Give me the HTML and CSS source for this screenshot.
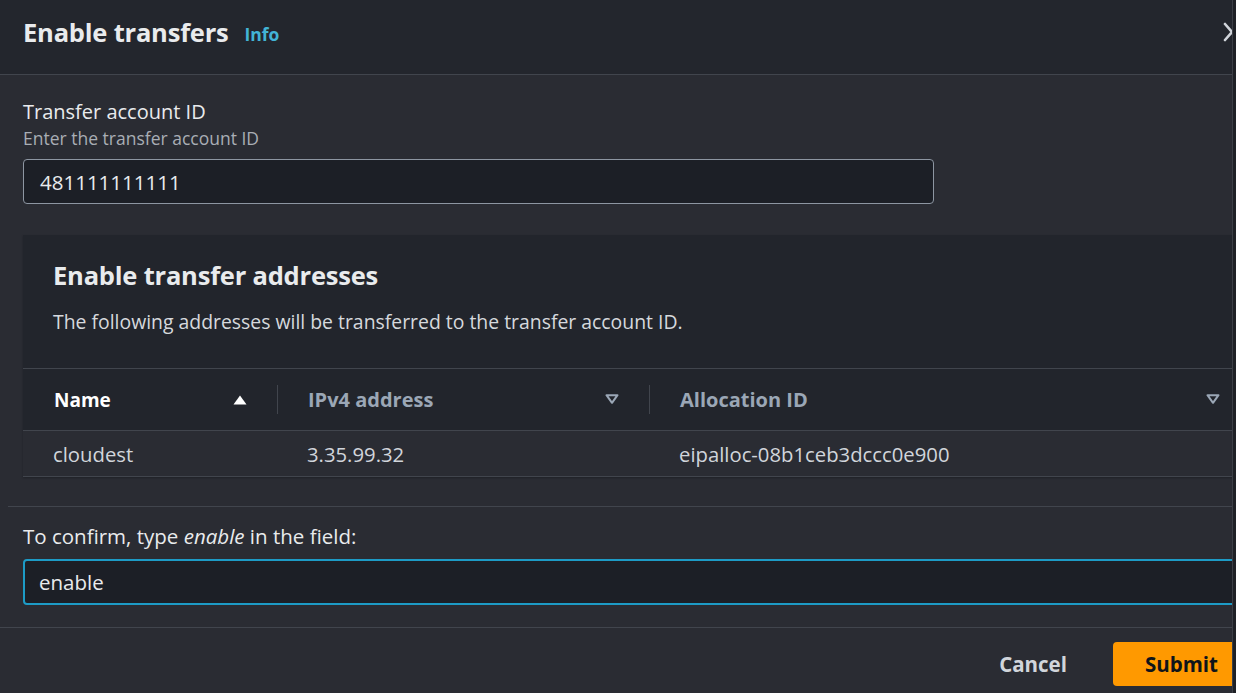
FILE: index.html
```html
<!DOCTYPE html>
<html lang="en">
<head>
  <meta charset="UTF-8" />
  <title>Enable transfers</title>
  <link rel="stylesheet" href="styles.css">
</head>
<body>
  <div class="modal">
    <div class="modal-inner">
      <!-- Header -->
      <div class="modal-header">
        <h1 class="title">Enable transfers</h1>
        <a class="info" href="#">Info</a>
        <button class="close" aria-label="Close">
          <svg width="20" height="20" viewBox="0 0 20 20"><path d="M3 2 L17 18 M17 2 L3 18" stroke="#d1d5db" stroke-width="2.6" stroke-linecap="round" fill="none"/></svg>
        </button>
      </div>

      <!-- Body -->
      <div class="modal-body">
        <div class="field">
          <label class="label">Transfer account ID</label>
          <div class="desc">Enter the transfer account ID</div>
          <div class="input short">481111111111</div>
        </div>

        <div class="panel">
          <div class="panel-head">
            <h2>Enable transfer addresses</h2>
            <p>The following addresses will be transferred to the transfer account ID.</p>
          </div>
          <table class="grid">
            <colgroup>
              <col style="width: 254px">
              <col style="width: 372px">
              <col>
            </colgroup>
            <thead>
              <tr>
                <th class="sorted"><span>Name</span>
                  <svg width="14" height="10" viewBox="0 0 14 10"><path d="M7 0.5 L13.5 9.5 L0.5 9.5 Z" fill="#ffffff"/></svg>
                </th>
                <th><span>IPv4 address</span>
                  <svg width="14" height="10" viewBox="0 0 14 10"><path d="M1.5 1.2 L12.5 1.2 L7 8.8 Z" fill="none" stroke="#9ba7b6" stroke-width="2" stroke-linejoin="round"/></svg>
                </th>
                <th><span>Allocation ID</span>
                  <svg width="14" height="10" viewBox="0 0 14 10"><path d="M1.5 1.2 L12.5 1.2 L7 8.8 Z" fill="none" stroke="#9ba7b6" stroke-width="2" stroke-linejoin="round"/></svg>
                </th>
              </tr>
            </thead>
            <tbody>
              <tr>
                <td>cloudest</td>
                <td>3.35.99.32</td>
                <td>eipalloc-08b1ceb3dccc0e900</td>
              </tr>
            </tbody>
          </table>
        </div>

        <div class="divider"></div>

        <div class="field confirm">
          <label class="label">To confirm, type <em>enable</em> in the field:</label>
          <div class="input focus">enable</div>
        </div>
      </div>

      <!-- Footer -->
      <div class="modal-footer">
        <button class="btn link">Cancel</button>
        <button class="btn primary">Submit</button>
      </div>
    </div>
  </div>
</body>
</html>
```

FILE: styles.css
```css
/* Page */
body {
  margin: 0;
  background-color: #1f2126;
  font-family: "Open Sans", "Noto Sans", sans-serif;
  color: #e9ebed;
  overflow: hidden;
}
/* Modal is wider than the window, so it gets clipped on the right */
.modal {
  width: 1232px;
  height: 693px;
  overflow: hidden;
  background-color: #2a2c33;
  border-right: 1px solid #3c3f46;
}
.modal-inner {
  width: 1227px;
  padding: 0 0 0 23px;
}
.modal-header {
  display: flex;
  align-items: center;
  box-sizing: border-box;
  height: 75px;
  margin-left: -23px;
  padding: 0 0 10px 23px;
  background-color: #23262d;
  border-bottom: 1px solid #41454d;
}
.title {
  margin: 0;
  font-size: 25.5px;
  line-height: 32px;
  font-weight: 700;
  color: #e9ebed;
  letter-spacing: -0.2px;
}
.info {
  margin-left: 16px;
  margin-top: 4px;
  font-size: 17.5px;
  font-weight: 700;
  color: #42b4d6;
  text-decoration: none;
}
.close {
  margin-left: auto;
  margin-right: 8px;
  background: none;
  border: none;
  padding: 0;
  display: flex;
}
/* Body */
.modal-body {
  padding-top: 24px;
}
.label {
  display: block;
  font-size: 20px;
  line-height: 25px;
  color: #e9ebed;
}
.desc {
  margin-top: 3px;
  font-size: 17.5px;
  line-height: 22px;
  color: #a9aeb5;
}
.input {
  box-sizing: border-box;
  height: 45px;
  margin-top: 10px;
  padding: 0 16px;
  display: flex;
  align-items: center;
  font-size: 20.5px;
  color: #e9ebed;
  background-color: #1c1f26;
  border: 1.5px solid #8d96a2;
  border-radius: 4px;
}
.input.short {
  width: 911px;
}
.input.focus {
  height: 46px;
  border: 2px solid #1d9bc6;
  padding-left: 14px;
}
/* Addresses container */
.panel {
  margin-top: 31px;
  background-color: #22252c;
  box-shadow: 0 1px 2px rgba(0, 0, 0, 0.25);
}
.panel-head {
  padding: 25px 30px 0;
}
.panel-head h2 {
  margin: 0;
  font-size: 25.5px;
  line-height: 30px;
  font-weight: 700;
  color: #e9ebed;
  letter-spacing: -0.2px;
}
.panel-head p {
  margin: 19px 0 0;
  font-size: 19.4px;
  line-height: 26px;
  color: #d6d9dd;
}
.grid {
  width: 100%;
  margin-top: 33px;
  border-collapse: collapse;
  table-layout: fixed;
}
.grid th {
  position: relative;
  height: 61px;
  padding: 0 30px 0 31px;
  text-align: left;
  font-size: 20px;
  font-weight: 700;
  color: #9ba7b6;
  border-top: 1px solid #41454d;
  border-bottom: 1px solid #41454d;
}
.grid th:first-child {
  font-size: 19px;
}
.grid th svg {
  float: right;
  margin-top: 8px;
}
.grid th + th::before {
  content: '';
  position: absolute;
  left: 0;
  top: 16px;
  bottom: 16px;
  border-left: 1px solid #41454d;
}
.grid th.sorted {
  color: #ffffff;
}
.grid td {
  height: 45px;
  padding: 0 0 0 30px;
  font-size: 20.3px;
  color: #d1d5db;
  background-color: #2a2c33;
  border-bottom: 1px solid #41454d;
}
.divider {
  margin: 29px 0 0 -15px;
  border-top: 1px solid #41454d;
}
.confirm {
  margin-top: 17px;
}
.confirm .label {
  font-size: 20.5px;
}
.confirm .input {
  margin-top: 10px;
}
/* Footer */
.modal-footer {
  display: flex;
  justify-content: flex-end;
  align-items: center;
  margin: 22px 0 0 -23px;
  padding-top: 14px;
  border-top: 1px solid #41454d;
}
.btn {
  font-family: "Open Sans", "Noto Sans", sans-serif;
  font-size: 20.5px;
  font-weight: 700;
  border: none;
  cursor: pointer;
}
.btn.link {
  background: none;
  color: #d1d5db;
  margin-right: 40px;
}
.btn.primary {
  height: 44px;
  padding: 0 32px;
  background-color: #ff9900;
  color: #0f141a;
  border-radius: 4px;
}
```
